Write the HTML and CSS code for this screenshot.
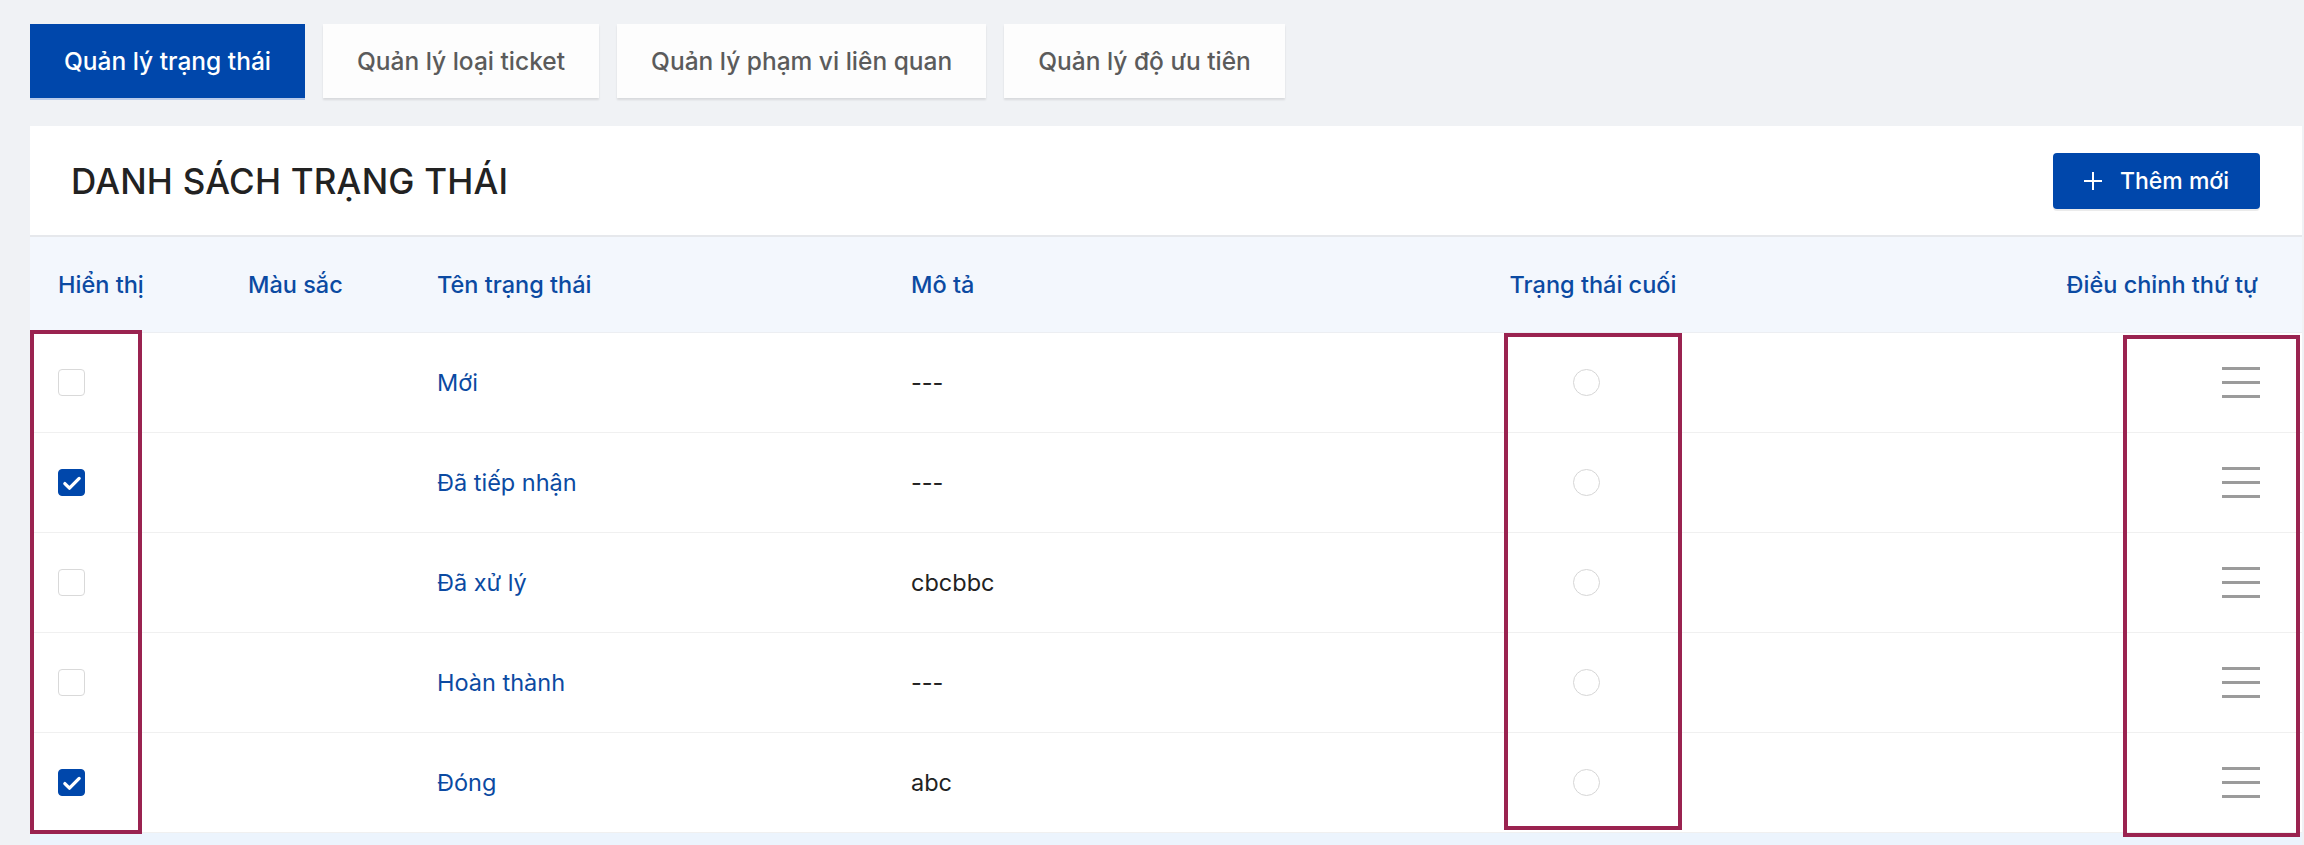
FILE: index.html
```html
<!DOCTYPE html>
<html lang="vi">
<head>
<meta charset="utf-8">
<title>Danh sách trạng thái</title>
<link rel="stylesheet" href="styles.css">
</head>
<body>
<div class="page">
  <nav class="tabs">
    <button class="tab active">Quản lý trạng thái</button>
    <button class="tab">Quản lý loại ticket</button>
    <button class="tab">Quản lý phạm vi liên quan</button>
    <button class="tab">Quản lý độ ưu tiên</button>
  </nav>

  <section class="card">
    <header class="card-head">
      <h1 class="title">DANH SÁCH TRẠNG THÁI</h1>
      <button class="btn-add">
        <svg class="plus" viewBox="0 0 20 20" width="20" height="20"><path d="M10 1v18M1 10h18" stroke="#fff" stroke-width="2" fill="none"/></svg>
        <span>Thêm mới</span>
      </button>
    </header>

    <div class="table">
      <div class="row head">
        <div class="c1">Hiển thị</div>
        <div class="c2">Màu sắc</div>
        <div class="c3">Tên trạng thái</div>
        <div class="c4">Mô tả</div>
        <div class="c5">Trạng thái cuối</div>
        <div class="c6">Điều chỉnh thứ tự</div>
      </div>

      <div class="row">
        <div class="c1"><span class="cb"></span></div>
        <div class="c2"></div>
        <div class="c3 name">Mới</div>
        <div class="c4 desc">---</div>
        <div class="c5"><span class="radio"></span></div>
        <div class="c6"><span class="drag"><i></i><i></i><i></i></span></div>
      </div>
      <div class="row">
        <div class="c1"><span class="cb on"><svg viewBox="0 0 20 20" width="22" height="22"><path d="M3.5 10.5l4.2 4.2L16.5 5.8" stroke="#fff" stroke-width="3" fill="none" stroke-linecap="round" stroke-linejoin="round"/></svg></span></div>
        <div class="c2"></div>
        <div class="c3 name">Đã tiếp nhận</div>
        <div class="c4 desc">---</div>
        <div class="c5"><span class="radio"></span></div>
        <div class="c6"><span class="drag"><i></i><i></i><i></i></span></div>
      </div>
      <div class="row">
        <div class="c1"><span class="cb"></span></div>
        <div class="c2"></div>
        <div class="c3 name">Đã xử lý</div>
        <div class="c4 desc">cbcbbc</div>
        <div class="c5"><span class="radio"></span></div>
        <div class="c6"><span class="drag"><i></i><i></i><i></i></span></div>
      </div>
      <div class="row">
        <div class="c1"><span class="cb"></span></div>
        <div class="c2"></div>
        <div class="c3 name">Hoàn thành</div>
        <div class="c4 desc">---</div>
        <div class="c5"><span class="radio"></span></div>
        <div class="c6"><span class="drag"><i></i><i></i><i></i></span></div>
      </div>
      <div class="row">
        <div class="c1"><span class="cb on"><svg viewBox="0 0 20 20" width="22" height="22"><path d="M3.5 10.5l4.2 4.2L16.5 5.8" stroke="#fff" stroke-width="3" fill="none" stroke-linecap="round" stroke-linejoin="round"/></svg></span></div>
        <div class="c2"></div>
        <div class="c3 name">Đóng</div>
        <div class="c4 desc">abc</div>
        <div class="c5"><span class="radio"></span></div>
        <div class="c6"><span class="drag"><i></i><i></i><i></i></span></div>
      </div>
      <div class="foot"></div>

      <div class="mark m1"></div>
      <div class="mark m2"></div>
      <div class="mark m3"></div>
    </div>
  </section>
</div>
</body>
</html>
```
FILE: styles.css
```css
* { box-sizing: border-box; }
html, body { margin: 0; padding: 0; }
body {
  background: #f0f2f5;
  font-family: Inter, "Noto Sans", "Liberation Sans", sans-serif;
  color: #222;
  overflow: hidden;
}
.page {
  padding: 24px 2px 0 30px;
}
.tabs {
  display: flex;
  gap: 18px;
  height: 74px;
}
.tab {
  font-family: inherit;
  font-size: 24.5px;
  font-weight: 500;
  color: #5b5b5b;
  background: #fdfdfd;
  border: none;
  padding: 0 34px;
  height: 74px;
  box-shadow: 0 2px 2px rgba(0,0,0,0.10);
  cursor: pointer;
}
.tab.active {
  background: #0047ab;
  color: #fff;
  box-shadow: 0 2px 0 #b9cbea;
}
.card {
  margin-top: 28px;
  background: #fff;
}
.card-head {
  height: 111px;
  display: flex;
  align-items: center;
  justify-content: space-between;
  padding: 0 42px 0 41px;
  border-bottom: 2px solid #e6e8ec;
}
.title {
  margin: 0;
  font-size: 35px;
  font-weight: 500;
  letter-spacing: 0.2px;
  color: #222;
}
.btn-add {
  display: flex;
  align-items: center;
  gap: 17px;
  height: 56px;
  width: 207px;
  padding: 0 0 0 30px;
  background: #0047ab;
  color: #fff;
  border: none;
  border-radius: 4px;
  font-family: inherit;
  font-size: 23px;
  font-weight: 500;
  box-shadow: 0 2px 0 rgba(0,0,0,0.08);
}
.table {
  position: relative;
}
.row {
  display: grid;
  grid-template-columns: 190px 189px 474px 593px 178px 1fr;
  align-items: center;
  height: 100px;
  padding: 0 44px 0 28px;
  border-bottom: 1px solid #f0f0f0;
  font-size: 23.5px;
}
.row.head {
  height: 96px;
  background: #f3f7fd;
  color: #0b4aa2;
  font-weight: 500;
  font-size: 23.5px;
  border-bottom: 1px solid #eceef2;
}
.c5 { text-align: center; display: flex; justify-content: center; }
.c6 { text-align: right; display: flex; justify-content: flex-end; }
.name { color: #0b4aa2; }
.desc { color: #222; }
.cb {
  display: flex;
  align-items: center;
  justify-content: center;
  width: 27px;
  height: 27px;
  border: 1.5px solid #d9d9d9;
  border-radius: 4px;
  background: #fff;
}
.cb.on {
  background: #0047ab;
  border-color: #0047ab;
}
.radio {
  display: block;
  width: 27px;
  height: 27px;
  border: 1.5px solid #d6d6d6;
  border-radius: 50%;
  margin-right: 14px;
}
.drag {
  display: flex;
  flex-direction: column;
  gap: 11px;
  width: 38px;
  margin-right: -2px;
}
.drag i {
  display: block;
  height: 3px;
  background: #9b9b9b;
}
.foot {
  height: 12px;
  background: #ecf4fd;
}
.mark {
  position: absolute;
  border: 4px solid #9a2350;
  pointer-events: none;
}
.m1 { left: 0; top: 93px; width: 112px; height: 504px; }
.m2 { left: 1474px; top: 96px; width: 178px; height: 497px; }
.m3 { left: 2093px; top: 98px; width: 177px; height: 502px; }
```
